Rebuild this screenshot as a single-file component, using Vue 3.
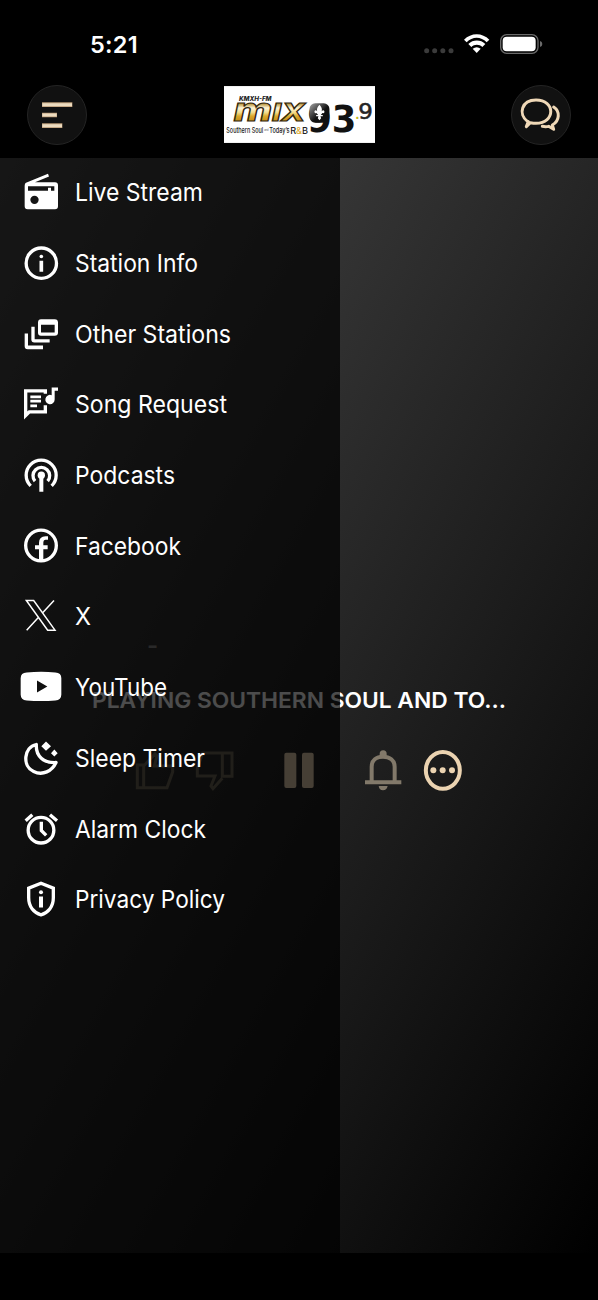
<script setup>
const menu = [
  { icon: 'radio', label: 'Live Stream', box: '60 33 126 126', width: 128 },
  { icon: 'info', label: 'Station Info', box: '60 246 126 126', width: 123 },
  { icon: 'feed', label: 'Other Stations', box: '60 458 126 126', width: 156 },
  { icon: 'song', label: 'Song Request', box: '60 70 126 126', width: 152 },
  { icon: 'podcast', label: 'Podcasts', box: '60 282 126 126', width: 100 },
  { icon: 'facebook', label: 'Facebook', box: '60 494 126 126', width: 106 },
  { icon: 'x', label: 'X', box: '60 76 126 126', width: 16 },
  { icon: 'youtube', label: 'YouTube', box: '60 288 126 126', width: 92 },
  { icon: 'sleep', label: 'Sleep Timer', box: '60 500 126 126', width: 130 },
  { icon: 'alarm', label: 'Alarm Clock', box: '60 52 126 126', width: 131 },
  { icon: 'privacy', label: 'Privacy Policy', box: '60 265 126 126', width: 150 },
]
</script>

<template>
  <div class="phone">
    <header class="top">
      <div class="status">
        <span class="time">5:21</span>
        <svg class="indicators" viewBox="70 96 366 72">
          <g fill="#3b3b3b"><circle cx="81" cy="152" r="7.5" /><circle cx="105" cy="152" r="7.5" /><circle cx="129.500" cy="152" r="7.500" /><circle cx="154" cy="152" r="7.500" /></g>
          <path d="M193 119C214 97 248 97 269 119L261 127C244 109 218 109 201 127Z" fill="#fff" />
          <path d="M206 132C220 118 243 118 257 132L248 141C239 132 224 132 215 141Z" fill="#fff" />
          <path d="M219 146Q231 137 243 146L231 159Z" fill="#fff" />
          <rect x="303" y="104" width="112" height="56" rx="18" fill="none" stroke="#6a6a6a" stroke-width="4" />
          <rect x="309" y="110" width="99" height="44" rx="12" fill="#fff" />
          <path d="M421 123Q428 125 428 132T421 141Z" fill="#6a6a6a" />
        </svg>
      </div>
      <div class="bar">
        <button class="round">
          <svg viewBox="82 253 180 180" width="60" height="60"><path d="M127 312H218M127 343H172M127 375H188" stroke="#b89975" stroke-width="14" /><path d="M128 312H217M128 343H171M128 375H187" stroke="#eddcc0" stroke-width="9" /></svg>
        </button>
        <svg class="logo" viewBox="26 24 454 171">
          <defs>
            <linearGradient id="gold" x1="0" y1="76" x2="0" y2="131" gradientUnits="userSpaceOnUse"><stop offset="0" stop-color="#b08a2e" /><stop offset=".25" stop-color="#fff6d8" /><stop offset=".5" stop-color="#f3dc8c" /><stop offset=".7" stop-color="#dba92c" /><stop offset="1" stop-color="#c08a1a" /></linearGradient>
            <linearGradient id="shine" x1="0" y1="0" x2="1" y2="1"><stop stop-color="#a5a5a5" /><stop offset=".55" stop-color="#111" /></linearGradient>
          </defs>
          <rect x="26" y="24" width="454" height="171" fill="#fff" />
          <text class="call" x="71" y="70" textLength="98" lengthAdjust="spacingAndGlyphs">KMXH-FM</text>
          <text class="mix" x="55" y="130" textLength="215" lengthAdjust="spacingAndGlyphs"><tspan class="em">m</tspan>IX</text>
          <text class="digits" x="276" y="161" textLength="148" lengthAdjust="spacingAndGlyphs">93</text>
          <rect x="283" y="76" width="60" height="58" rx="17" fill="url(#shine)" />
          <path d="M313 80C299 94 309 104 310 108C307 94 297 93 298 103C300 107 304 105 304 105L309 111H303V115H310L308 121L313 127L318 121L316 115H323V111H317L322 105S326 107 328 103C329 93 319 94 316 108C317 104 327 94 313 80Z" fill="#fff" />
          <text class="point" x="421" y="123">.</text>
          <text class="nine" x="430" y="122" textLength="44" lengthAdjust="spacingAndGlyphs">9</text>
          <text class="tag" x="33" y="164" textLength="111" lengthAdjust="spacingAndGlyphs">Southern Soul</text>
          <text class="tiny" x="147" y="158" textLength="13" lengthAdjust="spacingAndGlyphs">and</text>
          <text class="tag" x="162" y="165" textLength="61" lengthAdjust="spacingAndGlyphs">Today’s</text>
          <text class="rb" x="225" y="167" textLength="54" lengthAdjust="spacingAndGlyphs">R<tspan fill="#e2ad35">&amp;</tspan>B</text>
        </svg>
        <button class="round">
          <svg viewBox="333 253 180 180" width="60" height="60" fill="none" stroke="#efd8b7" stroke-width="9" stroke-linecap="round" stroke-linejoin="round">
            <path d="M383 363C353 340 365 298 408 298C467 298 467 367 408 368C401 368 396 367 391 366L379 378L385 363" />
            <path d="M461 319C481 332 479 361 457 373L461 386L446 377C438 379 432 378 427 377" />
          </svg>
        </button>
      </div>
    </header>

    <main class="player">
      <div class="artist">-</div>
      <div class="title"><svg width="416" height="34"><text x="0" y="25" textLength="414" lengthAdjust="spacingAndGlyphs">PLAYING SOUTHERN SOUL AND TO...</text></svg></div>
      <div class="controls">
        <svg class="thumb" viewBox="405 537 120 126"><path d="M412 585H431V653H412ZM431 588L465 552L471 558L463 588H518V606L501 653H431" /></svg>
        <svg class="thumb down" viewBox="585 537 120 126"><path d="M696 549H667V619H696ZM667 549H608L592 595V618H645L633 648L639 656L667 625" /></svg>
        <svg class="pause" viewBox="86 237 120 126"><rect x="102" y="248" width="36" height="106" rx="6" /><rect x="155" y="248" width="35" height="106" rx="6" /></svg>
        <svg class="bell" viewBox="340 237 120 126"><path d="M366 335V290C366 271 380 260 400 260S435 271 435 290V335" fill="none" stroke="#82796a" stroke-width="12" /><path d="M346 331H455V343H346ZM387 348H414Q411 361 400 361T387 348ZM390 259V251A10.500 10.500 0 0 1 411 251V259Z" /></svg>
        <svg class="more" viewBox="519 237 120 126"><ellipse cx="578.500" cy="301" rx="51" ry="55" fill="none" stroke="#ebd3b1" stroke-width="12" /><circle cx="550" cy="301" r="9" /><circle cx="578" cy="301" r="9" /><circle cx="606" cy="301" r="9" /></svg>
      </div>

      <nav class="drawer">
        <a v-for="item in menu" :key="item.icon" class="item">
          <svg class="icon" :viewBox="item.box">
            <template v-if="item.icon === 'radio'">
              <path fill-rule="evenodd" d="M78 69L144 42L147 50L105 67H165Q174 67 174 76V139Q174 148 165 148H83Q74 148 74 139V78Q74 71 78 69ZM84 79V93H144V84H153V93H163V79ZM116 120A12.500 12.500 0 1 0 91 120A12.500 12.500 0 1 0 116 120Z" />
            </template>
            <template v-else-if="item.icon === 'info'">
              <circle class="line" cx="124" cy="310" r="45.500" /><circle cx="124" cy="290" r="5.500" /><path d="M118.500 303H129.500V336H118.500Z" />
            </template>
            <template v-else-if="item.icon === 'feed'">
              <path fill-rule="evenodd" d="M123 477H164Q174 477 174 487V518Q174 527 164 527H123Q114 527 114 518V487Q114 477 123 477ZM123 494V517H164V494Z" />
              <path d="M94 500H104V537H149V547H103Q94 547 94 538ZM74 520H84V556H129V567H83Q74 567 74 558Z" />
            </template>
            <template v-else-if="item.icon === 'song'">
              <path class="line" d="M136 103V94H77V168L88 157H136V137" />
              <path d="M91 108H123V116H91ZM91 121H123V129H91ZM91 135H111V143H91ZM155 84H174V94H164V120A14 14 0 1 1 155 107Z" />
            </template>
            <template v-else-if="item.icon === 'podcast'">
              <path class="line" d="M92 378A45 45 0 1 1 155 378M105 364A25 25 0 1 1 143 364" /><circle cx="124" cy="346" r="11" /><path d="M118 350H130V396H118Z" />
            </template>
            <template v-else-if="item.icon === 'facebook'">
              <circle class="line" cx="123" cy="556" r="46" /><path d="M117 603V567H105V555H117V548Q117 528 137 528H144V539H137Q130 539 130 548V555H143V567H130V603Z" />
            </template>
            <template v-else-if="item.icon === 'x'">
              <path class="thin" d="M79 93H101L165 182H143ZM162 93L128 130M115 144L80 182" />
            </template>
            <template v-else-if="item.icon === 'youtube'">
              <path fill-rule="evenodd" d="M80 308Q124 304 166 308Q184 309 184 325V374Q184 391 166 392Q124 395 80 392Q62 391 62 374V325Q62 309 80 308ZM111 332V368L142 350Z" />
            </template>
            <template v-else-if="item.icon === 'sleep'">
              <path class="line round-line" d="M109 523C71 531 66 588 101 604C128 617 156 603 168 577C131 579 107 558 109 523Z" /><path d="M138 514L153 528L138 542L124 528ZM163 538L173 549L163 559L153 549Z" />
            </template>
            <template v-else-if="item.icon === 'alarm'">
              <circle class="line" cx="123" cy="119" r="38.500" /><path d="M119 94H129V118L142 131L135 138L119 122Z" /><path class="line" d="M77 91L97 73M150 73L171 91" />
            </template>
            <template v-else>
              <path class="line" d="M123 281L160 296V325C160 352 144 371 123 376C102 371 86 352 86 325V296Z" /><circle cx="123" cy="308" r="6" /><path d="M117 321H129V354H117Z" />
            </template>
          </svg>
          <svg class="label" :width="item.width + 4" height="40"><text x="0" y="29" :textLength="item.width" lengthAdjust="spacingAndGlyphs">{{ item.label }}</text></svg>
        </a>
      </nav>
    </main>
    <footer></footer>
  </div>
</template>

<style>
html, body { margin: 0; background: #000; }
</style>

<style scoped>
.phone { width: 598px; height: 1300px; display: flex; flex-direction: column; background: #000; color: #fff; font-family: Inter, "Liberation Sans", sans-serif; overflow: hidden; }
.top { height: 158px; flex: none; }
.status { height: 84px; box-sizing: border-box; display: flex; justify-content: space-between; padding: 32px 54px 0 90px; }
.time { font-size: 23.500px; line-height: 26px; font-weight: 600; letter-spacing: .25px; }
.indicators { width: 122px; height: 24px; margin-right: -.5px; }
.bar { height: 61px; display: flex; justify-content: space-between; align-items: center; padding: 0 27px; }
.round { width: 60px; height: 60px; border: 1px solid #242424; border-radius: 50%; background: #111; padding: 0; display: flex; align-items: center; justify-content: center; flex: none; }
.round svg { flex: none; }
.logo { width: 151px; height: 57px; font-family: Inter, sans-serif; }
.call { font-size: 17px; font-style: italic; font-weight: 800; fill: #222; }
.mix { font-size: 75px; font-weight: 800; font-style: italic; fill: url(#gold); stroke: #32260d; stroke-width: 3.500; }
.em { font-size: 98px; }
.digits { font-family: "DejaVu Sans", sans-serif; font-size: 114px; font-weight: 700; fill: #111; }
.point { font-size: 34px; fill: #c2bd20; font-weight: 900; }
.nine { font-family: "DejaVu Sans", sans-serif; font-size: 62px; fill: #252525; stroke: #252525; stroke-width: 1.500; }
.tag { font-size: 23px; fill: #151515; font-weight: 500; }
.tiny { font-size: 9px; fill: #555; }
.rb { font-size: 28px; fill: #222; font-weight: 500; }
.player { position: relative; height: 1095px; flex: none; background: linear-gradient(to bottom right, #4b4b4b, #000); }
.artist { height: 34px; padding: 471px 0 0 147px; font-size: 24px; line-height: 34px; font-weight: 600; color: #8b8b8b; }
.title { height: 34px; margin-top: 20px; padding-left: 92px; }
.title svg, .label { display: block; }
.title text { font-size: 22px; font-weight: 600; fill: #fff; }
.controls { display: flex; margin-top: 32px; padding-left: 135px; }
.controls svg { width: 40px; height: 42px; flex: none; fill: #ebd3b1; }
.controls .thumb { fill: none; stroke: #716858; stroke-width: 9; }
.controls .down { margin-left: 20px; }
.controls .pause { margin-left: 43.700px; }
.controls .bell { margin-left: 44.600px; fill: #82796a; }
.controls .more { margin-left: 19.700px; }
.drawer { position: absolute; left: 0; top: 0; width: 340px; height: 1095px; box-sizing: border-box; background: rgba(0, 0, 0, .7); }
.item { display: flex; align-items: center; height: 70.700px; padding-left: 20px; transform: translateY(-1.150px); }
.icon { width: 42px; height: 42px; fill: #fff; flex: none; }
.line { fill: none; stroke: #fff; stroke-width: 10; }
.round-line { stroke-linejoin: round; }
.thin { fill: none; stroke: #fff; stroke-width: 4.500; }
.label { margin-left: 13.300px; overflow: visible; }
.label text { font-size: 24.300px; fill: #fff; }
footer { height: 47px; background: #000; }
</style>
